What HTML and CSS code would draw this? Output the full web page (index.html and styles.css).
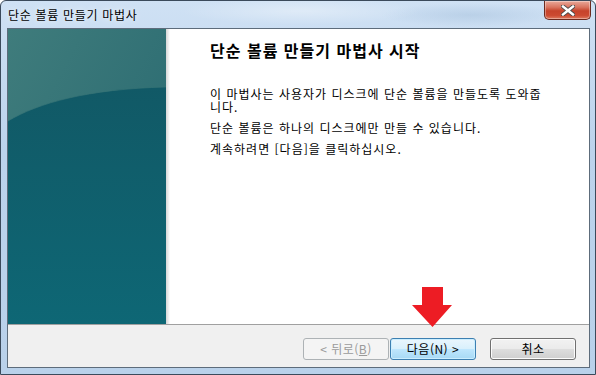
FILE: index.html
```html
<!DOCTYPE html>
<html lang="ko">
<head>
  <meta charset="UTF-8">
  <title>단순 볼륨 만들기 마법사</title>
  <link rel="stylesheet" href="styles.css">
</head>
<body>
  <div class="window">
    <div class="titlebar">
      <span class="title">단순 볼륨 만들기 마법사</span>
      <button class="close-btn" aria-label="닫기">
        <svg width="14" height="11" viewBox="0 0 14 11">
          <path d="M2 1.5 L12 9.5 M12 1.5 L2 9.5" stroke="#4a4a4a" stroke-width="4.2" stroke-linecap="square"/>
          <path d="M2 1.5 L12 9.5 M12 1.5 L2 9.5" stroke="#ffffff" stroke-width="2.4" stroke-linecap="square"/>
        </svg>
      </button>
    </div>

    <div class="client">
      <div class="wizard">
        <div class="banner">
          <svg width="158" height="295" viewBox="0 0 158 295">
            <defs>
              <linearGradient id="topGlow" x1="0" y1="0" x2="1" y2="1">
                <stop offset="0" stop-color="#3f7c7c"/>
                <stop offset="1" stop-color="#26676f"/>
              </linearGradient>
              <linearGradient id="lower" x1="0" y1="0" x2="0" y2="1">
                <stop offset="0" stop-color="#115966"/>
                <stop offset="1" stop-color="#0e6775"/>
              </linearGradient>
            </defs>
            <rect width="158" height="295" fill="url(#topGlow)"/>
            <path d="M0 92 C30 74 80 60 158 58 L158 295 L0 295 Z" fill="url(#lower)"/>
            <path d="M0 92 C30 74 80 60 158 58" fill="none" stroke="#3a7778" stroke-width="1" opacity="0.6"/>
          </svg>
        </div>
        <div class="shade"></div>
        <div class="intro">
          <h1>단순 볼륨 만들기 마법사 시작</h1>
          <p>이 마법사는 사용자가 디스크에 단순 볼륨을 만들도록 도와줍니다.</p>
          <p>단순 볼륨은 하나의 디스크에만 만들 수 있습니다.</p>
          <p>계속하려면 [다음]을 클릭하십시오.</p>
        </div>
      </div>

      <div class="footer">
        <button class="btn" disabled>&lt; 뒤로(<u>B</u>)</button>
        <button class="btn btn-default">다음(N) &gt;</button>
        <button class="btn btn-cancel">취소</button>
      </div>
    </div>

    <div class="pointer">
      <svg width="40" height="40" viewBox="0 0 40 40">
        <polygon points="10,0 31,0 31,18 40,18 20.5,40 0,18 10,18" fill="#ed1c24"/>
      </svg>
    </div>
  </div>
</body>
</html>
```

FILE: styles.css
```css
:root {
  --frame-color: #c2d8ef;
  --frame-dark: #3b4a5b;
  --client-border: #5d6c7b;
  --face-color: #f0f0f0;
  --separator: #a0a0a0;
  --text-color: #000000;
  --disabled-text: #9a9a9a;
}

body {
  margin: 0;
  font-family: "Noto Sans CJK KR", "Noto Sans", sans-serif;
  color: var(--text-color);
  background-color: #ffffff;
}

.window {
  position: relative;
  width: 596px;
  height: 375px;
  box-sizing: border-box;
  border: 1px solid var(--frame-dark);
  border-radius: 6px 6px 0 0;
  background:
    radial-gradient(ellipse 120px 14px at 300px 10px, rgba(255, 255, 255, 0.35), transparent),
    radial-gradient(ellipse 90px 12px at 470px 14px, rgba(150, 180, 210, 0.35), transparent),
    linear-gradient(180deg, #cfe1f4 0%, #bcd3ec 40%, #b9d1ea 100%);
  overflow: hidden;
}

.titlebar {
  height: 27px;
  display: flex;
  align-items: flex-start;
}

.title {
  font-size: 12px;
  line-height: 16px;
  letter-spacing: 0.7px;
  padding: 6px 0 0 7px;
  text-shadow: 0 0 6px rgba(255, 255, 255, 0.9);
}

.close-btn {
  margin-left: auto;
  margin-right: 4px;
  width: 47px;
  height: 19px;
  padding: 0;
  border: 1px solid #6b2a1f;
  border-top: none;
  border-radius: 0 0 5px 5px;
  background: linear-gradient(180deg, #e9a99a 0%, #d9745f 35%, #c6432b 55%, #cc4a31 80%, #de7a5f 100%);
  box-shadow: inset 0 0 0 1px rgba(255, 255, 255, 0.35);
  display: flex;
  align-items: center;
  justify-content: center;
}

.client {
  margin: 0 5px 0 6px;
  height: 340px;
  box-sizing: border-box;
  border: 1px solid var(--client-border);
  background-color: #ffffff;
  display: flex;
  flex-direction: column;
}

.wizard {
  height: 295px;
  display: flex;
}

.banner {
  width: 158px;
  height: 295px;
}

.banner svg {
  display: block;
}

.shade {
  width: 4px;
  background: linear-gradient(90deg, #d6d6d6, #f2f2f2 70%, #ffffff);
}

.intro {
  padding: 11px 0 0 40px;
  width: 332px;
}

.intro h1 {
  font-size: 16px;
  font-weight: 700;
  line-height: 20px;
  letter-spacing: 1px;
  margin: 0 0 27px 0;
}

.intro p {
  font-size: 12px;
  line-height: 13px;
  letter-spacing: 1px;
  margin: 0 0 8px 0;
}

.footer {
  flex: 1;
  border-top: 1px solid var(--separator);
  background-color: var(--face-color);
  display: flex;
  justify-content: flex-end;
  align-items: flex-start;
  padding: 13px 13px 0 0;
}

.btn {
  width: 86px;
  height: 22px;
  padding: 0;
  font-family: inherit;
  font-size: 12px;
  line-height: 18px;
  letter-spacing: 0.5px;
  color: var(--text-color);
  border: 1px solid #707070;
  border-radius: 3px;
  background: linear-gradient(180deg, #f2f2f2 0%, #ebebeb 48%, #dddddd 52%, #cfcfcf 100%);
  box-shadow: inset 0 0 0 1px #fcfcfc;
}

.btn:disabled {
  color: var(--disabled-text);
  border-color: #adb2b5;
  background: #f4f4f4;
  box-shadow: none;
}

.btn-default {
  margin-left: 1px;
  border-color: #3c7fb1;
  background: linear-gradient(180deg, #eaf6fd 0%, #d9f0fc 48%, #bee6fd 52%, #a7d9f5 100%);
  box-shadow: inset 0 0 0 1px #cbeeff;
}

.btn-cancel {
  margin-left: 14px;
}

.pointer {
  position: absolute;
  left: 411px;
  top: 286px;
}

.pointer svg {
  display: block;
}
```
